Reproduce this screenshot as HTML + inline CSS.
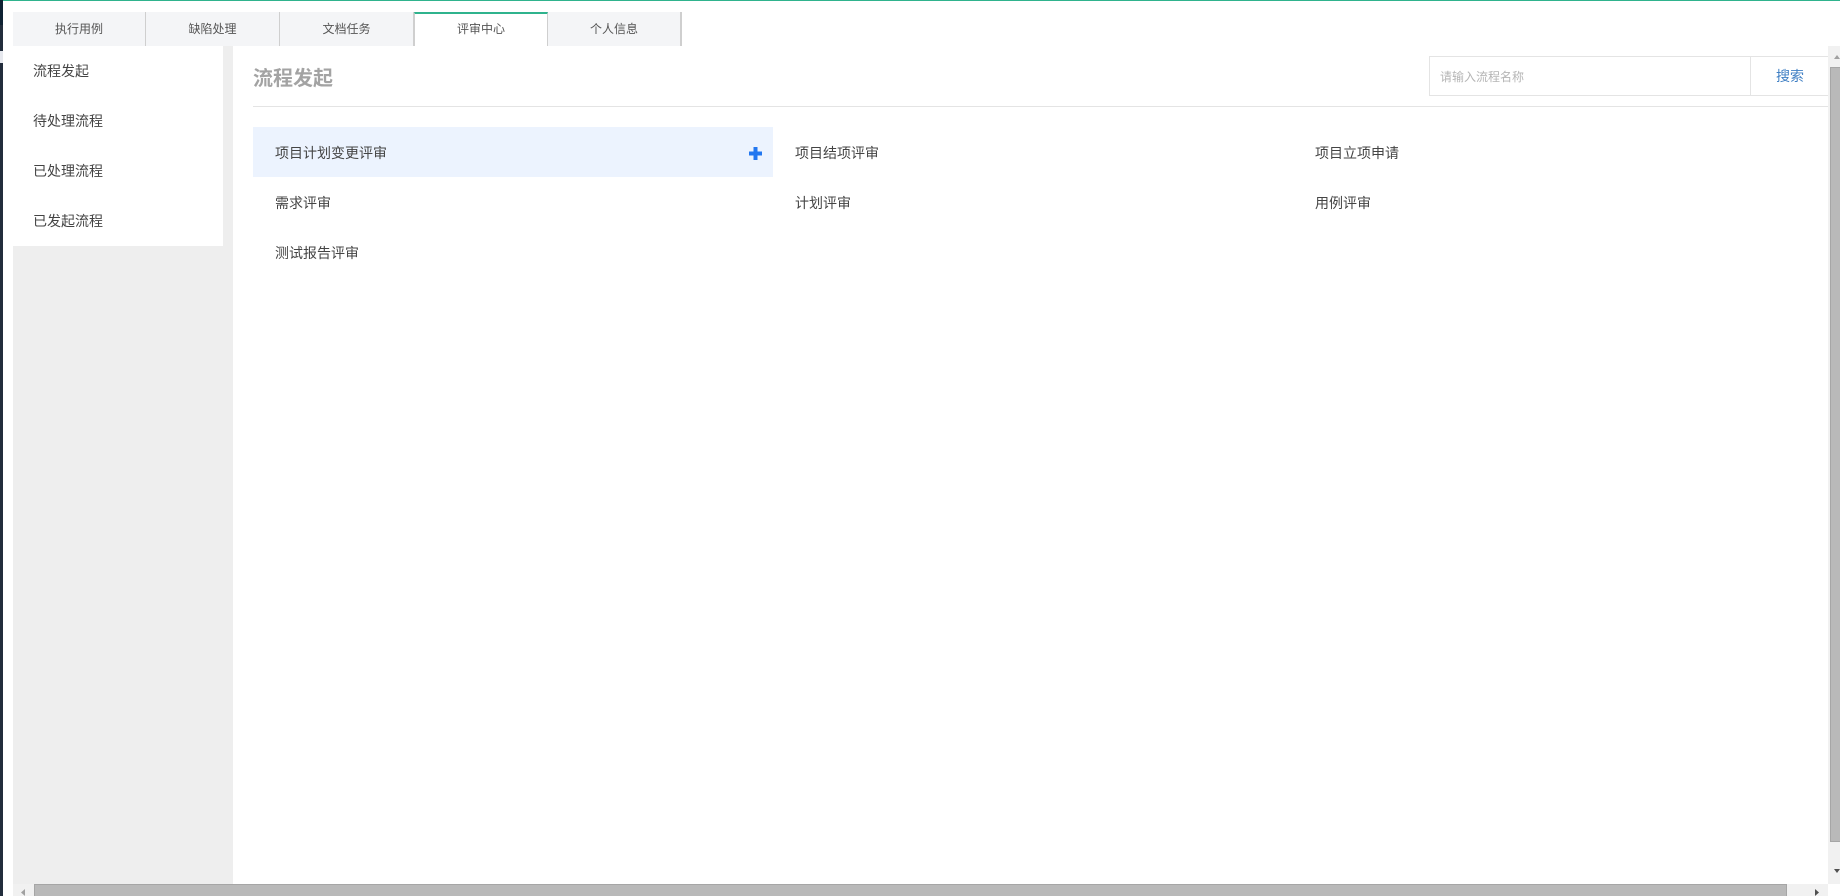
<!DOCTYPE html>
<html lang="zh-CN">
<head>
<meta charset="utf-8">
<title>流程发起</title>
<style>
html,body{margin:0;padding:0;width:1840px;height:896px;overflow:hidden;background:#fff}
body{position:relative;font-family:"Liberation Sans","Noto Sans CJK SC",sans-serif;color:#444}
.a{position:absolute}
.t{position:absolute;white-space:nowrap;line-height:20px;height:20px}
.tab{position:absolute;top:12px;height:34px;background:#f4f5f7;box-sizing:border-box;text-align:center;font-size:12px;line-height:34px;color:#555;border-right:1px solid #cfcfcf}
.tab.on{background:#fff;border-top:2px solid #2fb38d;line-height:31px}
.s{font-size:14px;left:33px;color:#444}
.i{font-size:14px;color:#444}
</style>
</head>
<body>
<div class="a" style="left:0;top:0;width:3px;height:896px;background:#222d3c"></div>
<div class="a" style="left:0;top:0;width:3px;height:25px;background:#0f2233"></div>
<div class="a" style="left:0;top:51px;width:3px;height:12px;background:#e6e8ee"></div>
<div class="a" style="left:3px;top:0;width:1837px;height:1px;background:#2fb38d"></div>

<div class="tab" style="left:13px;width:133px">执行用例</div>
<div class="tab" style="left:146px;width:134px">缺陷处理</div>
<div class="tab" style="left:280px;width:134px">文档任务</div>
<div class="tab on" style="left:414px;width:134px;border-left:1px solid #cfcfcf">评审中心</div>
<div class="tab" style="left:548px;width:134px;border-right-width:2px">个人信息</div>

<div class="a" style="left:13px;top:46px;width:220px;height:838px;background:#eee"></div>
<div class="a" style="left:13px;top:46px;width:210px;height:200px;background:#fff"></div>
<div class="t s" style="top:61px">流程发起</div>
<div class="t s" style="top:111px">待处理流程</div>
<div class="t s" style="top:161px">已处理流程</div>
<div class="t s" style="top:211px">已发起流程</div>

<div class="t" style="left:253px;top:66px;height:26px;line-height:26px;font-size:20px;font-weight:bold;color:#a3a3a3">流程发起</div>

<div class="a" style="left:1429px;top:56px;width:399px;height:40px;box-sizing:border-box;border:1px solid #e4e4e4;border-right:0;background:#fff"></div>
<div class="a" style="left:1750px;top:56px;width:1px;height:40px;background:#e4e4e4"></div>
<div class="t" style="left:1440px;top:67px;font-size:12px;color:#b5b5b5">请输入流程名称</div>
<div class="t" style="left:1776px;top:66px;font-size:14px;color:#3f7fc4;letter-spacing:0">搜索</div>
<div class="a" style="left:253px;top:106px;width:1575px;height:1px;background:#e4e4e4"></div>

<div class="a" style="left:253px;top:127px;width:520px;height:50px;background:#ecf3fe"></div>
<svg class="a" style="left:749px;top:147px" width="13" height="13" viewBox="0 0 13 13"><path d="M4.5 0h4v4.5H13v4H8.500V13h-4V8.500H0v-4h4.500z" fill="#2277f0"/></svg>
<div class="t i" style="left:275px;top:143px">项目计划变更评审</div>
<div class="t i" style="left:795px;top:143px">项目结项评审</div>
<div class="t i" style="left:1315px;top:143px">项目立项申请</div>
<div class="t i" style="left:275px;top:193px">需求评审</div>
<div class="t i" style="left:795px;top:193px">计划评审</div>
<div class="t i" style="left:1315px;top:193px">用例评审</div>
<div class="t i" style="left:275px;top:243px">测试报告评审</div>

<div class="a" style="left:1828px;top:46px;width:12px;height:838px;background:#f1f1f1"></div>
<div class="a" style="left:1830px;top:67px;width:10px;height:775px;box-sizing:border-box;background:#b9b9b9;border:1px solid #a6a6a6;border-right:0"></div>
<svg class="a" style="left:1834px;top:55px" width="6" height="4"><path d="M3 0L6 4H0z" fill="#a0a0a0"/></svg>
<svg class="a" style="left:1834px;top:869px" width="6" height="4"><path d="M0 0H6L3 4z" fill="#505050"/></svg>

<div class="a" style="left:13px;top:884px;width:1815px;height:12px;background:#f1f1f1"></div>
<div class="a" style="left:34px;top:884px;width:1753px;height:12px;box-sizing:border-box;background:#b9b9b9;border:1px solid #a6a6a6;border-bottom:0"></div>
<svg class="a" style="left:21px;top:889px" width="4" height="7"><path d="M4 0V7L0 3.500z" fill="#a0a0a0"/></svg>
<svg class="a" style="left:1815px;top:889px" width="4" height="7"><path d="M0 0V7L4 3.500z" fill="#505050"/></svg>
</body>
</html>
